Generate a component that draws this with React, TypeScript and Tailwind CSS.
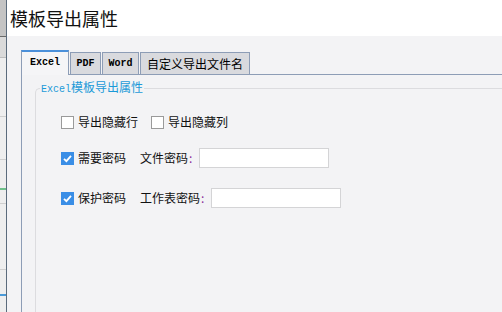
import React, { useState } from 'react';

const cjk = { fontFamily: '"Noto Sans CJK SC", "Microsoft YaHei", sans-serif' };
const mono = { fontFamily: '"Liberation Mono", "Noto Sans CJK SC", monospace' };

const Checkbox: React.FC<{ checked: boolean; onChange: () => void }> = ({ checked, onChange }) => (
  <button
    type="button"
    onClick={onChange}
    className={`flex h-[13px] w-[13px] shrink-0 items-center justify-center ${
      checked ? 'bg-[#3a8ee6]' : 'border border-[#9a9a9a] bg-white'
    }`}
  >
    {checked && (
      <svg width="11" height="11" viewBox="0 0 11 11">
        <path d="M2 5.8 L4.4 8.2 L9 2.8" fill="none" stroke="white" strokeWidth="1.8" />
      </svg>
    )}
  </button>
);

export default function App() {
  const [tab, setTab] = useState('Excel');
  const [hideRows, setHideRows] = useState(false);
  const [hideCols, setHideCols] = useState(false);
  const [needPwd, setNeedPwd] = useState(true);
  const [protectPwd, setProtectPwd] = useState(true);

  const tabs = [
    { id: 'Excel', label: 'Excel', latin: true },
    { id: 'PDF', label: 'PDF', latin: true },
    { id: 'Word', label: 'Word', latin: true },
    { id: 'Name', label: '自定义导出文件名', latin: false },
  ];

  return (
    <div className="flex h-[312px] w-[502px] overflow-hidden bg-white" style={cjk}>
      {/* background window strip */}
      <div className="flex w-[7px] shrink-0 flex-col border-r border-[#5b6b7c] bg-[#eeeeee]">
        <div className="h-[37px] border-b border-[#6a6a6a] bg-[#c4c4c4]" />
        <div className="h-[21px] border-b border-[#bdbdbd] bg-[#dadada]" />
        <div className="h-[59px] border-b border-[#cfcfcf]" />
        <div className="h-[43px] border-b border-[#cfcfcf]" />
        <div className="h-[30px] border-b-2 border-[#6fc08a]" />
        <div className="h-[14px] border-b border-[#cfcfcf]" />
        <div className="h-[66px] border-b border-[#cfcfcf]" />
        <div className="h-[26px] border-b-2 border-[#4a9ad8]" />
      </div>

      <div className="flex min-w-0 flex-1 flex-col">
        <div className="flex h-[36px] shrink-0 items-center pl-[3px] text-[18px] text-[#111]">
          模板导出属性
        </div>

        <div className="flex flex-1 flex-col bg-[#f3f3f5] pl-[14px] pt-[14px]">
          {/* tabs */}
          <div className="flex h-[25px] items-end border-b border-[#8d9db6]">
            {tabs.map((t) => {
              const active = tab === t.id;
              return (
                <button
                  key={t.id}
                  type="button"
                  onClick={() => setTab(t.id)}
                  className={
                    active
                      ? 'relative -mb-px flex h-[25px] w-[48px] items-start justify-center border-x border-t-2 border-x-[#8d9db6] border-t-[#4b90da] bg-[#f5f5f7] pt-[3px] text-[10px] font-bold text-black'
                      : `ml-px flex h-[22px] items-center justify-center border-x border-t border-[#8d9db6] bg-[#d9dade] text-black ${
                          t.latin ? 'text-[10px] font-bold' : 'text-[12px]'
                        } ${t.id === 'PDF' ? 'w-[31px]' : t.id === 'Word' ? 'w-[37px]' : 'w-[110px]'}`
                  }
                  style={t.latin ? mono : cjk}
                >
                  {t.label}
                </button>
              );
            })}
          </div>

          {/* tab body */}
          <div className="flex flex-1 border-l border-[#8d9db6] pl-[13px] pt-[6px]">
            <fieldset className="w-[520px] rounded-tl-[5px] border-l border-t border-[#dcdcdf] pl-[4px]">
              <legend className="px-[1px] text-[12px] leading-[12px] text-[#1b9ad8]">
                <span className="text-[10px]" style={mono}>
                  Excel
                </span>
                模板导出属性
              </legend>

              <div className="pl-[21px] pt-[16px] text-[12px] text-[#111]">
                <div className="flex h-[20px] items-center">
                  <Checkbox checked={hideRows} onChange={() => setHideRows(!hideRows)} />
                  <span className="ml-[4px]">导出隐藏行</span>
                  <span className="ml-[13px]" />
                  <Checkbox checked={hideCols} onChange={() => setHideCols(!hideCols)} />
                  <span className="ml-[4px]">导出隐藏列</span>
                </div>

                <div className="mt-[16px] flex h-[20px] items-center">
                  <Checkbox checked={needPwd} onChange={() => setNeedPwd(!needPwd)} />
                  <span className="ml-[4px] w-[62px]">需要密码</span>
                  <span>文件密码</span>
                  <span className="ml-px text-[#8a2b9a]">:</span>
                  <input
                    type="password"
                    className="ml-[7px] h-[20px] w-[130px] border border-[#d4d4d6] bg-white outline-none"
                  />
                </div>

                <div className="mt-[20px] flex h-[20px] items-center">
                  <Checkbox checked={protectPwd} onChange={() => setProtectPwd(!protectPwd)} />
                  <span className="ml-[4px] w-[62px]">保护密码</span>
                  <span>工作表密码</span>
                  <span className="ml-px text-[#8a2b9a]">:</span>
                  <input
                    type="password"
                    className="ml-[7px] h-[20px] w-[130px] border border-[#d4d4d6] bg-white outline-none"
                  />
                </div>
              </div>
            </fieldset>
          </div>
        </div>
      </div>
    </div>
  );
}
